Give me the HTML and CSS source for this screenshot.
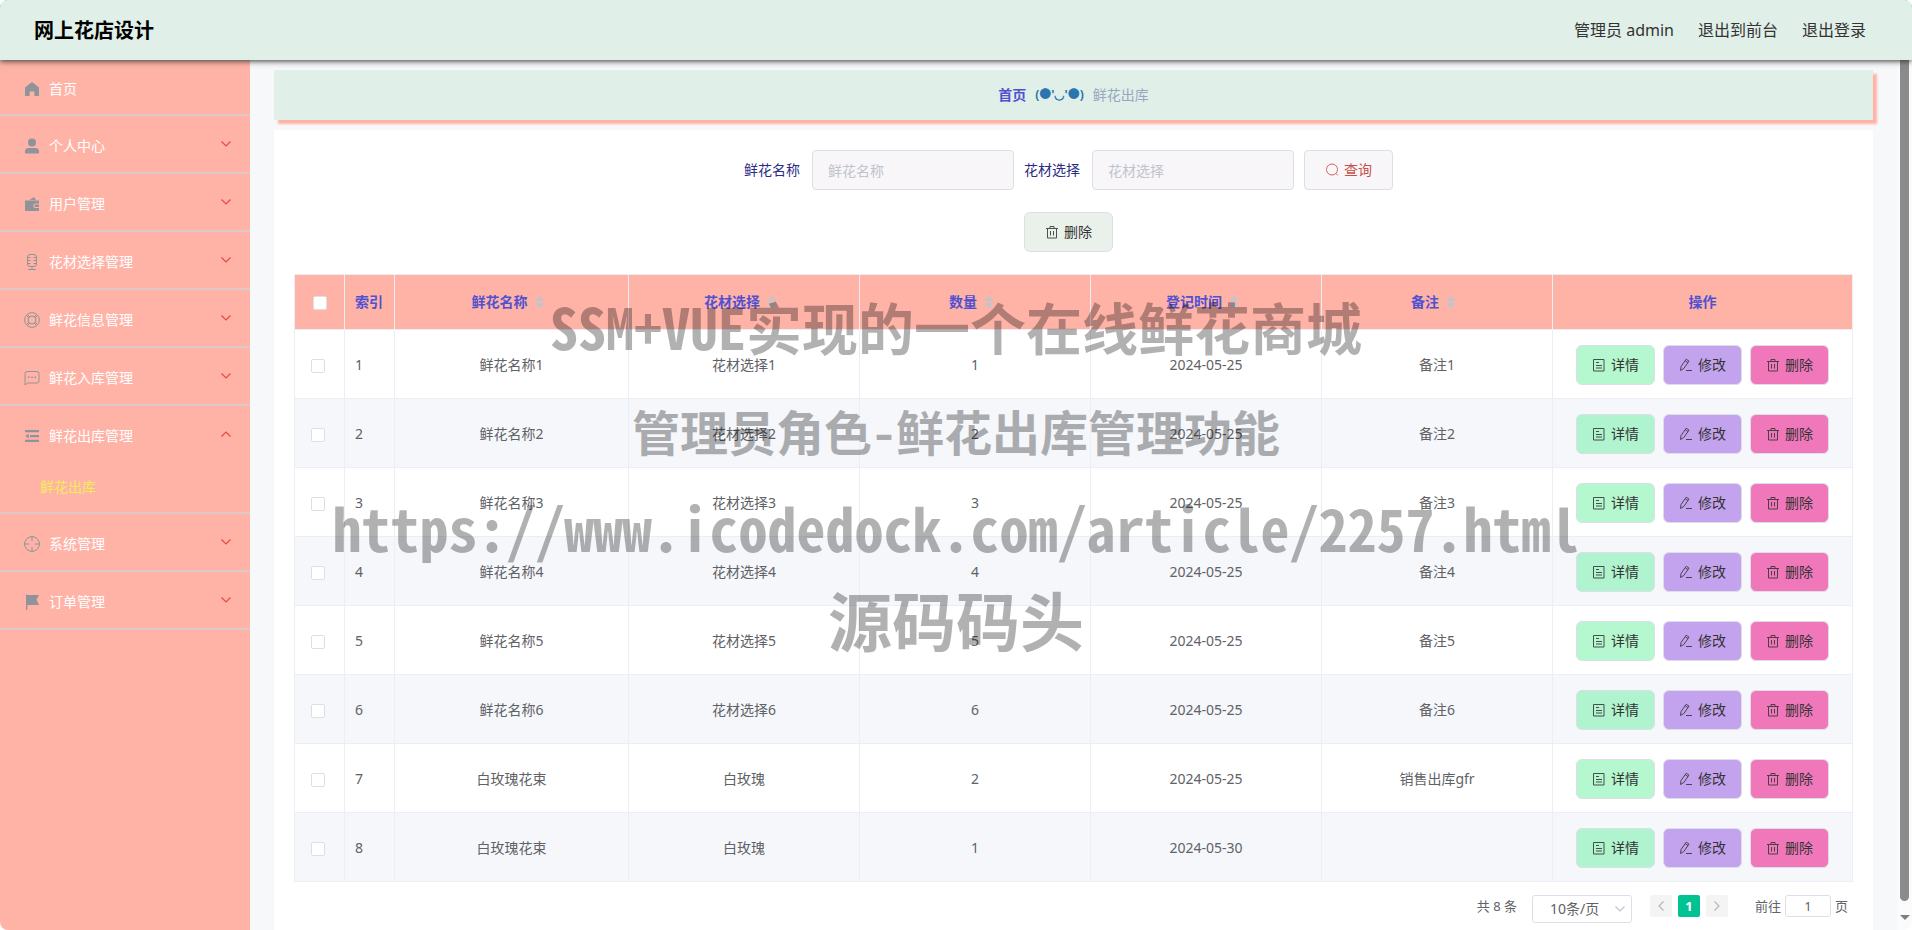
FILE: index.html
```html
<!DOCTYPE html>
<html lang="zh-CN">
<head>
<meta charset="utf-8">
<title>网上花店设计</title>
<link rel="stylesheet" href="styles.css">
</head>
<body>
<svg class="sprite" aria-hidden="true">
  <symbol id="i-home" viewBox="0 0 16 16"><path fill="currentColor" d="M8 1 1 6.4V15h4.6v-4.600h4.800V15H15V6.400z"/></symbol>
  <symbol id="i-user" viewBox="0 0 16 16"><circle cx="8" cy="4.5" r="4" fill="currentColor"/><path fill="currentColor" d="M1 15.5v-2.2C1 11 2.700 10 4.500 10h7c1.800 0 3.500 1 3.500 3.300v2.200z"/></symbol>
  <symbol id="i-wallet" viewBox="0 0 16 16"><path fill="currentColor" fill-rule="evenodd" d="M5.500 4 10 1l1.800 3zM1 4.600h14v3h-3.500a2.200 2.200 0 0 0 0 4.400H15v3H1zM11.600 8.600H15v2.400h-3.400a1.200 1.200 0 0 1 0-2.400z"/></symbol>
  <symbol id="i-mic" viewBox="0 0 16 16"><g fill="none" stroke="currentColor"><rect x="3.500" y=".500" width="9" height="12" rx="2.500"/><path d="M8 12.500v3M4 15.500h8M3.500 3.500h3M9.500 3.500h3M3.500 6.500h3M9.500 6.500h3M3.500 9.500h3M9.500 9.500h3"/></g></symbol>
  <symbol id="i-help" viewBox="0 0 16 16"><g fill="none" stroke="currentColor"><circle cx="8" cy="8" r="7.400"/><circle cx="8" cy="8" r="4"/><path d="m2.800 3.800 2.200 2M3.800 2.800l2 2.200M13.200 3.800l-2.200 2M12.200 2.800l-2 2.200M2.800 12.200l2.200-2M3.800 13.200l2-2.200M13.200 12.200l-2.200-2M12.200 13.200l-2-2.200"/></g></symbol>
  <symbol id="i-chat" viewBox="0 0 16 16"><path fill="none" stroke="currentColor" d="M1 15V3.500a2 2 0 0 1 2-2h10a2 2 0 0 1 2 2v7.500a2 2 0 0 1-2 2H3.500z"/><path fill="currentColor" d="M4 6.500h1.500V8H4zM7.300 6.500h1.500V8H7.300zM10.500 6.500H12V8h-1.500z"/></symbol>
  <symbol id="i-fold" viewBox="0 0 16 16"><path fill="currentColor" d="M1 2h14v2.200H1zM6 7h9v2.200H6zM1 11.800h14V14H1zM1.200 8.100 4.800 5.800v4.600z"/></symbol>
  <symbol id="i-aim" viewBox="0 0 16 16"><g fill="none" stroke="currentColor"><circle cx="8" cy="8" r="7.400"/><path d="M8 .500V5M8 11v4.500M.500 8H5M11 8h4.500"/></g></symbol>
  <symbol id="i-flag" viewBox="0 0 16 16"><path fill="currentColor" d="M2 .500h1.300V1H15l-2.500 4.800L15 11H3.300v5H2z"/></symbol>
  <symbol id="i-down" viewBox="0 0 12 12"><path fill="none" stroke="currentColor" stroke-width="1.200" d="m1.500 3.500 4.500 4.500 4.500-4.500"/></symbol>
  <symbol id="i-search" viewBox="0 0 14 14"><g fill="none" stroke="currentColor"><circle cx="7" cy="6.500" r="5.500"/><path d="m10.800 10.400 2 2"/></g></symbol>
  <symbol id="i-trash" viewBox="0 0 14 14"><path fill="none" stroke="currentColor" d="M1 3.500h12M2.500 3.500v9.500h9V3.500M5 3.500v-2h4v2M5.500 6v4.500M8.500 6v4.500"/></symbol>
  <symbol id="i-doc" viewBox="0 0 14 14"><path fill="none" stroke="currentColor" d="M1.500 1.500h10.500v11.500H1.500zM4 4.500h3M4 7.500h6M4 10h6"/></symbol>
  <symbol id="i-edit" viewBox="0 0 14 14"><path fill="none" stroke="currentColor" d="M7 12.500h6M2 8.600 7.200 1.200l2.800 1.900-5.200 7.400L1.500 12.500zM6.200 2.700 9 4.600"/></symbol>
</svg>

<div class="app">
  <header class="topbar">
    <h1 class="brand">网上花店设计</h1>
    <nav class="account"><span>管理员 admin</span><a href="#">退出到前台</a><a href="#">退出登录</a></nav>
  </header>

  <div class="body">
    <nav class="sidebar">
      <a class="item home" href="#"><svg class="ico"><use href="#i-home"/></svg><span>首页</span></a>
      <a class="item" href="#"><svg class="ico"><use href="#i-user"/></svg><span>个人中心</span><svg class="arrow"><use href="#i-down"/></svg></a>
      <a class="item" href="#"><svg class="ico"><use href="#i-wallet"/></svg><span>用户管理</span><svg class="arrow"><use href="#i-down"/></svg></a>
      <a class="item" href="#"><svg class="ico"><use href="#i-mic"/></svg><span>花材选择管理</span><svg class="arrow"><use href="#i-down"/></svg></a>
      <a class="item" href="#"><svg class="ico"><use href="#i-help"/></svg><span>鲜花信息管理</span><svg class="arrow"><use href="#i-down"/></svg></a>
      <a class="item" href="#"><svg class="ico"><use href="#i-chat"/></svg><span>鲜花入库管理</span><svg class="arrow"><use href="#i-down"/></svg></a>
      <a class="item open" href="#"><svg class="ico"><use href="#i-fold"/></svg><span>鲜花出库管理</span><svg class="arrow"><use href="#i-down"/></svg></a>
      <a class="subitem" href="#">鲜花出库</a>
      <a class="item" href="#"><svg class="ico"><use href="#i-aim"/></svg><span>系统管理</span><svg class="arrow"><use href="#i-down"/></svg></a>
      <a class="item" href="#"><svg class="ico"><use href="#i-flag"/></svg><span>订单管理</span><svg class="arrow"><use href="#i-down"/></svg></a>
    </nav>

    <main class="main">
      <div class="crumbs"><a href="#">首页</a><b class="face">(●'◡'●)</b><span>鲜花出库</span></div>
      <section class="panel">
        <form class="search">
          <label for="f-name">鲜花名称</label><input id="f-name" class="field" type="text" placeholder="鲜花名称">
          <label for="f-kind">花材选择</label><input id="f-kind" class="field" type="text" placeholder="花材选择">
          <button type="button" class="btn query"><svg><use href="#i-search"/></svg>查询</button>
        </form>
        <div class="tools"><button type="button" class="btn remove"><svg><use href="#i-trash"/></svg>删除</button></div>

        <table class="grid">
          <colgroup><col class="c-small"><col class="c-small"><col class="c-name"><col><col><col><col><col class="c-ops"></colgroup>
          <thead>
            <tr><th><input type="checkbox" class="check" aria-label="全选"></th><th class="idx">索引</th><th><span class="sort">鲜花名称</span></th><th><span class="sort">花材选择</span></th><th><span class="sort">数量</span></th><th><span class="sort">登记时间</span></th><th><span class="sort">备注</span></th><th>操作</th></tr>
          </thead>
          <tbody>
            <tr><td class="pick"><input type="checkbox" class="check" aria-label="选择 1"></td><td class="idx">1</td><td>鲜花名称1</td><td>花材选择1</td><td>1</td><td>2024-05-25</td><td>备注1</td>
              <td><div class="ops"><button type="button" class="btn view"><svg><use href="#i-doc"/></svg>详情</button><button type="button" class="btn edit"><svg><use href="#i-edit"/></svg>修改</button><button type="button" class="btn del"><svg><use href="#i-trash"/></svg>删除</button></div></td></tr>
            <tr><td class="pick"><input type="checkbox" class="check" aria-label="选择 2"></td><td class="idx">2</td><td>鲜花名称2</td><td>花材选择2</td><td>2</td><td>2024-05-25</td><td>备注2</td>
              <td><div class="ops"><button type="button" class="btn view"><svg><use href="#i-doc"/></svg>详情</button><button type="button" class="btn edit"><svg><use href="#i-edit"/></svg>修改</button><button type="button" class="btn del"><svg><use href="#i-trash"/></svg>删除</button></div></td></tr>
            <tr><td class="pick"><input type="checkbox" class="check" aria-label="选择 3"></td><td class="idx">3</td><td>鲜花名称3</td><td>花材选择3</td><td>3</td><td>2024-05-25</td><td>备注3</td>
              <td><div class="ops"><button type="button" class="btn view"><svg><use href="#i-doc"/></svg>详情</button><button type="button" class="btn edit"><svg><use href="#i-edit"/></svg>修改</button><button type="button" class="btn del"><svg><use href="#i-trash"/></svg>删除</button></div></td></tr>
            <tr><td class="pick"><input type="checkbox" class="check" aria-label="选择 4"></td><td class="idx">4</td><td>鲜花名称4</td><td>花材选择4</td><td>4</td><td>2024-05-25</td><td>备注4</td>
              <td><div class="ops"><button type="button" class="btn view"><svg><use href="#i-doc"/></svg>详情</button><button type="button" class="btn edit"><svg><use href="#i-edit"/></svg>修改</button><button type="button" class="btn del"><svg><use href="#i-trash"/></svg>删除</button></div></td></tr>
            <tr><td class="pick"><input type="checkbox" class="check" aria-label="选择 5"></td><td class="idx">5</td><td>鲜花名称5</td><td>花材选择5</td><td>5</td><td>2024-05-25</td><td>备注5</td>
              <td><div class="ops"><button type="button" class="btn view"><svg><use href="#i-doc"/></svg>详情</button><button type="button" class="btn edit"><svg><use href="#i-edit"/></svg>修改</button><button type="button" class="btn del"><svg><use href="#i-trash"/></svg>删除</button></div></td></tr>
            <tr><td class="pick"><input type="checkbox" class="check" aria-label="选择 6"></td><td class="idx">6</td><td>鲜花名称6</td><td>花材选择6</td><td>6</td><td>2024-05-25</td><td>备注6</td>
              <td><div class="ops"><button type="button" class="btn view"><svg><use href="#i-doc"/></svg>详情</button><button type="button" class="btn edit"><svg><use href="#i-edit"/></svg>修改</button><button type="button" class="btn del"><svg><use href="#i-trash"/></svg>删除</button></div></td></tr>
            <tr><td class="pick"><input type="checkbox" class="check" aria-label="选择 7"></td><td class="idx">7</td><td>白玫瑰花束</td><td>白玫瑰</td><td>2</td><td>2024-05-25</td><td>销售出库gfr</td>
              <td><div class="ops"><button type="button" class="btn view"><svg><use href="#i-doc"/></svg>详情</button><button type="button" class="btn edit"><svg><use href="#i-edit"/></svg>修改</button><button type="button" class="btn del"><svg><use href="#i-trash"/></svg>删除</button></div></td></tr>
            <tr><td class="pick"><input type="checkbox" class="check" aria-label="选择 8"></td><td class="idx">8</td><td>白玫瑰花束</td><td>白玫瑰</td><td>1</td><td>2024-05-30</td><td></td>
              <td><div class="ops"><button type="button" class="btn view"><svg><use href="#i-doc"/></svg>详情</button><button type="button" class="btn edit"><svg><use href="#i-edit"/></svg>修改</button><button type="button" class="btn del"><svg><use href="#i-trash"/></svg>删除</button></div></td></tr>
          </tbody>
        </table>

        <div class="pager">
          <span>共 8 条</span>
          <div class="size"><select aria-label="每页条数"><option>10条/页</option></select><svg><use href="#i-down"/></svg></div>
          <div class="pages">
            <button type="button" class="prev" aria-label="上一页"><svg><use href="#i-down"/></svg></button>
            <button type="button" class="current">1</button>
            <button type="button" class="next" aria-label="下一页"><svg><use href="#i-down"/></svg></button>
          </div>
          <div class="jump"><label for="jump">前往</label><input id="jump" type="text" value="1"><span>页</span></div>
        </div>
      </section>
    </main>
    <div class="scroll" aria-hidden="true"><div class="thumb"></div><div class="tip"></div></div>
  </div>

  <div class="watermark">
    <p class="wm-a">SSM+VUE实现的一个在线鲜花商城</p>
    <p class="wm-b">管理员角色-鲜花出库管理功能</p>
    <p class="wm-c">https://www.icodedock.com/article/2257.html</p>
    <p class="wm-d">源码码头</p>
  </div>
</div>
</body>
</html>
```

FILE: styles.css
```css
* { box-sizing: border-box; }

body {
  margin: 0;
  font: 14px/20px "Noto Sans", "Noto Sans CJK SC", sans-serif;
  color: #606266;
  background: #fff;
}

a { color: inherit; text-decoration: none; }
button, input, select { font: inherit; color: inherit; }
.sprite { display: none; }

.app {
  position: relative;
  display: flex;
  flex-direction: column;
  height: 100vh;
  overflow: hidden;
  border-radius: 8px;
}

/* top bar */
.topbar {
  position: relative;
  z-index: 2;
  flex: none;
  display: flex;
  align-items: center;
  justify-content: space-between;
  height: 60px;
  padding: 0 46px 0 34px;
  background: #e0efe8;
  box-shadow: 0 1px 6px #333;
}
.brand { margin: 0; padding-top: 2px; font-size: 20px; line-height: 28px; color: #000; }
.account { display: flex; gap: 24px; font-size: 16px; line-height: 24px; color: #333; }

.body { flex: 1; display: flex; min-height: 0; }

/* sidebar */
.sidebar { flex: none; width: 250px; background: #ffb3a7; color: #fff; }
.item {
  display: flex;
  align-items: center;
  height: 58px;
  padding: 3px 18px 0 24px;
  border-bottom: 2px solid #ddc8c6;
}
.item.home { height: 56px; }
.item.open { border-bottom-color: transparent; }
.item span { flex: 1; }
.ico { width: 16px; height: 16px; margin-right: 9px; color: #909399; }
.arrow { width: 12px; height: 12px; margin-bottom: 4px; color: #e8483f; }
.item.open .arrow { transform: rotate(180deg); }
.subitem {
  display: block;
  height: 50px;
  padding-left: 40px;
  line-height: 46px;
  color: #f5ec5a;
  border-bottom: 2px solid #ddc8c6;
}

/* content */
.main { flex: 1; min-width: 0; padding: 10px 24px 0; background: #f7f8fa; overflow: hidden; }
.crumbs {
  display: flex;
  align-items: center;
  justify-content: center;
  gap: 9px;
  height: 50px;
  margin-bottom: 10px;
  background: #e0efe8;
  box-shadow: 4px 4px 2px #ffb3a7;
  color: #97a8be;
}
.crumbs a { font-weight: bold; color: #5151cf; }
.face { font-size: 12px; color: #2c76b0; }
.panel { padding: 20px; background: #fff; min-height: 100%; }

.search, .tools { display: flex; justify-content: center; align-items: center; padding-right: 10px; }
.search { margin-bottom: 22px; color: #2c2c85; }
.search label { margin-right: 12px; }
.field {
  width: 202px;
  height: 40px;
  margin-right: 10px;
  padding: 0 15px;
  border: 1px solid #dcdfe6;
  border-radius: 4px;
  background: #f8f6f8;
  outline: 0;
}
.field::placeholder { color: #c0c4cc; }
.tools { margin-bottom: 22px; }

.btn {
  display: inline-flex;
  align-items: center;
  justify-content: center;
  gap: 5px;
  height: 40px;
  padding: 0;
  border: 1px solid #dcdfe6;
  border-radius: 6px;
  color: #333;
}
.btn svg { width: 14px; height: 14px; opacity: .85; }
.query { width: 89px; border-radius: 4px; background: #f8f6f8; color: #c8504b; }
.remove { width: 89px; background: #eaf1ea; }
.view { background: #b5f8cf; }
.edit { background: #c4a3ee; }
.del { background: #f078ba; }
tbody tr:nth-child(even) .view { background: #b0f4cf; }

/* table */
.grid {
  width: 100%;
  table-layout: fixed;
  border-spacing: 0;
  border-top: 1px solid #ebeef5;
  border-left: 1px solid #ebeef5;
}
.c-small { width: 50px; }
.c-name { width: 234px; }
.c-ops { width: 300px; }
.grid th, .grid td {
  padding: 0 10px;
  text-align: center;
  border-right: 1px solid #ebeef5;
  border-bottom: 1px solid #ebeef5;
}
.grid th { height: 55px; background: #ffb3a7; color: #5151cf; }
.grid td { height: 69px; padding-top: 2px; }
.grid .pick { padding-right: 14px; }
.grid .idx { text-align: left; white-space: nowrap; }
.grid tbody tr:nth-child(even) { background: #f5f7fb; }
.sort { display: inline-flex; align-items: center; }
.sort::after {
  content: "";
  width: 10px;
  height: 12px;
  margin: 0 7px;
  background: #c0c4cc;
  clip-path: polygon(50% 0, 100% 42%, 0 42%, 0 58%, 100% 58%, 50% 100%, 0 58%, 0 42%);
}
.check {
  appearance: none;
  display: inline-block;
  width: 14px;
  height: 14px;
  margin: 0;
  vertical-align: middle;
  border: 1px solid #dcdfe6;
  border-radius: 2px;
  background: #fff;
}
.ops { display: flex; justify-content: center; gap: 8px; }
.ops .btn { width: 79px; }

/* pagination */
.pager {
  display: flex;
  justify-content: flex-end;
  align-items: flex-start;
  padding: 13px 5px 0;
  font-size: 13px;
  line-height: 22px;
}
.size { position: relative; margin: 0 18px 0 15px; }
.size select {
  appearance: none;
  display: block;
  width: 100px;
  height: 28px;
  padding: 0 17px;
  border: 1px solid #dcdfe6;
  border-radius: 3px;
  background: #fff;
  font-size: 14px;
}
.size svg { position: absolute; right: 6px; top: 8px; width: 12px; height: 12px; color: #c0c4cc; }
.pages { display: flex; gap: 6px; margin-right: 27px; }
.pages button {
  display: flex;
  align-items: center;
  justify-content: center;
  width: 22px;
  height: 22px;
  padding: 0;
  border: 0;
  border-radius: 2px;
  background: #f4f4f5;
  color: #b4b7be;
  font-weight: bold;
}
.pages .current { background: #00c292; color: #fff; }
.pages svg { width: 12px; height: 12px; }
.prev svg { transform: rotate(90deg); }
.next svg { transform: rotate(-90deg); }
.jump { display: flex; gap: 4px; }
.jump input {
  width: 46px;
  height: 22px;
  padding: 0;
  text-align: center;
  border: 1px solid #dcdfe6;
  border-radius: 3px;
}

/* scrollbar */
.scroll {
  flex: none;
  display: flex;
  flex-direction: column;
  align-items: center;
  width: 15px;
  background: #fbfbfb;
}
.thumb { flex: 1; width: 9px; background: #8b8b8b; border-radius: 0 0 5px 5px; }
.tip {
  margin: 14px 0 10px;
  border: 5px solid transparent;
  border-top-color: #7f7f7f;
  border-bottom: 0;
}

/* watermark laid over the page */
.watermark {
  position: absolute;
  z-index: 3;
  inset: 0;
  padding-top: 274px;
  text-align: center;
  font-family: "Noto Sans Mono CJK SC", "Liberation Mono", "Noto Sans CJK SC", monospace;
  font-weight: bold;
  color: #000;
  opacity: .3;
  white-space: nowrap;
  pointer-events: none;
}
.watermark p { margin: 0; }
.wm-a { font-size: 56px; line-height: 104px; }
.wm-b { font-size: 48px; line-height: 104px; }
.wm-c { font-size: 58px; line-height: 90px; }
.wm-d { font-size: 64px; line-height: 92px; }
```
